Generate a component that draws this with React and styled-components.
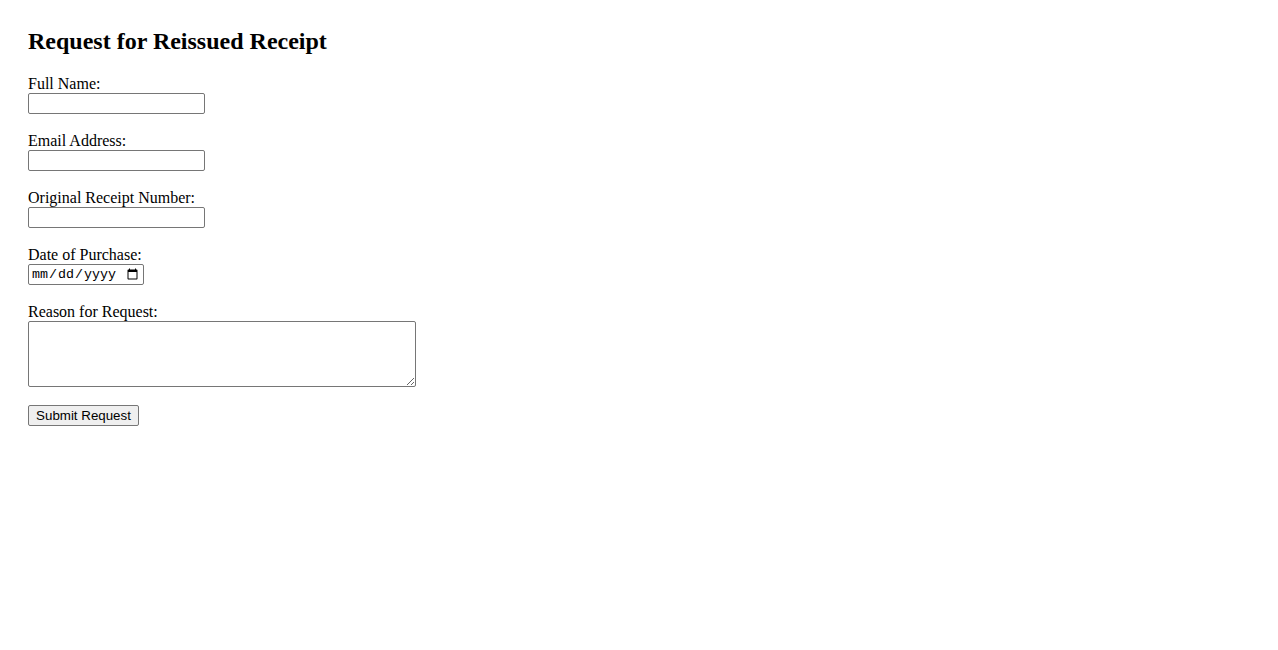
import React from "react";
import styled, { createGlobalStyle } from "styled-components";

const Global = createGlobalStyle`
  html, body { margin: 0; padding: 0; background: #fff; }
  body { font-family: "Liberation Serif", "Times New Roman", serif; color: #000; }
`;

const Page = styled.div`
  padding: 28px;
`;

const Title = styled.h2`
  margin: 0 0 22px;
  font-size: 24px;
  line-height: 26px;
  font-weight: bold;
`;

const Form = styled.form`
  display: flex;
  flex-direction: column;
  align-items: flex-start;
`;

const Field = styled.div`
  display: flex;
  flex-direction: column;
  align-items: flex-start;
  margin-bottom: ${(p) => p.$gap ?? 19}px;
`;

const Label = styled.label`
  display: block;
  font-size: 16px;
  line-height: 15px;
  height: 17px;
`;

const Input = styled.input`
  box-sizing: border-box;
  width: ${(p) => p.$w || 177}px;
  height: 21px;
  margin: 0;
  padding: 1px 2px;
  border: 1px solid #767676;
  border-radius: 2px;
  background: #fff;
  font-family: ${(p) => (p.$mono ? '"Liberation Mono", monospace' : '"Liberation Sans", Arial, sans-serif')};
  font-size: 13.33px;
  color: #000;
`;

const TextArea = styled.textarea`
  box-sizing: border-box;
  width: 388px;
  height: 66px;
  margin: 0;
  padding: 2px;
  border: 1px solid #767676;
  border-radius: 2px;
  font-family: "Liberation Mono", monospace;
  font-size: 13.33px;
`;

const Button = styled.button`
  box-sizing: border-box;
  height: 21px;
  width: 111px;
  margin: 0;
  padding: 1px 6px;
  border: 1px solid #767676;
  border-radius: 2px;
  background: #efefef;
  font-family: "Liberation Sans", Arial, sans-serif;
  font-size: 13.33px;
  color: #000;
`;

export default function App() {
  return (
    <Page>
      <Global />
      <Title>Request for Reissued Receipt</Title>
      <Form onSubmit={(e) => e.preventDefault()}>
        <Field>
          <Label htmlFor="name">Full Name:</Label>
          <Input id="name" type="text" />
        </Field>
        <Field>
          <Label htmlFor="email">Email Address:</Label>
          <Input id="email" type="email" />
        </Field>
        <Field>
          <Label htmlFor="receipt">Original Receipt Number:</Label>
          <Input id="receipt" type="text" />
        </Field>
        <Field>
          <Label htmlFor="date">Date of Purchase:</Label>
          <Input id="date" type="date" $w={116} $mono />
        </Field>
        <Field $gap={18}>
          <Label htmlFor="reason">Reason for Request:</Label>
          <TextArea id="reason" />
        </Field>
        <Button type="submit">Submit Request</Button>
      </Form>
    </Page>
  );
}
